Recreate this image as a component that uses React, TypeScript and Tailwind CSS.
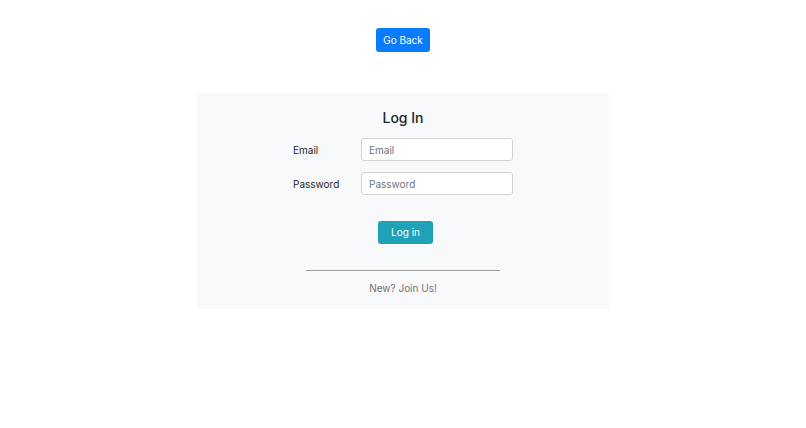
import React from "react";

export default function App() {
  return (
    <div className="min-h-[428px] w-full bg-white flex flex-col items-center" style={{ fontFamily: "Inter, 'Liberation Sans', sans-serif" }}>
      <button className="mt-[28px] h-[24px] w-[54px] rounded-[3px] bg-[#0a7bfb] text-white text-[10px] leading-[15px]">
        Go Back
      </button>
      <div className="mt-[41px] w-[412px] bg-[#f8f9fa] flex flex-col items-center pt-[16px] pb-[13px]">
        <h3 className="text-[14px] leading-[17px] font-medium text-[#212529]">Log In</h3>
        <div className="mt-[12px] flex flex-col gap-[11px] w-[220px]">
          <div className="flex items-center">
            <label className="w-[68px] pt-[1px] text-[10px] leading-[15px] text-[#212529]">Email</label>
            <input
              placeholder="Email"
              className="w-[152px] h-[23px] rounded-[3px] border border-[#ced4da] bg-white px-[7px] text-[10px] text-[#495057] placeholder:text-[#6c757d] outline-none"
            />
          </div>
          <div className="flex items-center">
            <label className="w-[68px] pt-[1px] text-[10px] leading-[15px] text-[#212529]">Password</label>
            <input
              type="password"
              placeholder="Password"
              className="w-[152px] h-[23px] rounded-[3px] border border-[#ced4da] bg-white px-[7px] text-[10px] text-[#495057] placeholder:text-[#6c757d] outline-none"
            />
          </div>
        </div>
        <button className="mt-[26px] ml-[5px] h-[23px] w-[55px] rounded-[3px] bg-[#1fa2b8] text-white text-[10px] leading-[15px]">
          Log in
        </button>
        <div className="mt-[26px] w-[194px] border-t border-[#9a9a9a]" />
        <p className="mt-[10px] text-[10px] leading-[15px] text-[#6c757d]">New? Join Us!</p>
      </div>
    </div>
  );
}
